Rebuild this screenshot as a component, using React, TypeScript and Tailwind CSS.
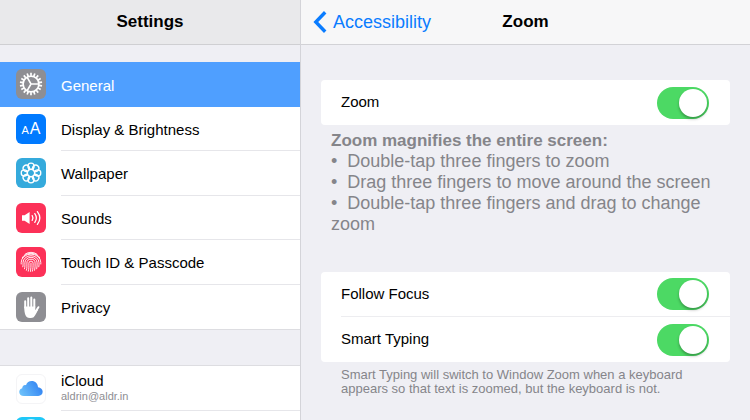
import { useState, type ReactNode } from "react";

interface NavItem {
  name: string;
  color: string;
  icon: ReactNode;
}

const TEETH = Array.from({ length: 18 }, (_, i) => i * 20);
const PETALS = Array.from({ length: 8 }, (_, i) => i * 45);

function GearIcon() {
  return (
    <svg viewBox="0 0 30 30" className="w-full h-full" fill="none" stroke="white">
      <circle cx="15" cy="15" r="7.9" strokeWidth="1.7" />
      {TEETH.map((a) => (
        <path key={a} d="M15 6.8V3.8" strokeWidth="1.7" transform={`rotate(${a} 15 15)`} />
      ))}
      <path d="M15 15h7.5M15 15L11.2 8.4M15 15L11.2 21.6" strokeWidth="1.6" />
    </svg>
  );
}

function FlowerIcon() {
  return (
    <svg viewBox="0 0 30 30" className="w-full h-full" fill="none" stroke="white" strokeWidth="1.3">
      {PETALS.map((a) => (
        <circle key={a} cx="15" cy="8.3" r="3.1" transform={`rotate(${a} 15 15)`} />
      ))}
      <circle cx="15" cy="15" r="3.6" />
    </svg>
  );
}

function SpeakerIcon() {
  return (
    <svg viewBox="0 0 30 30" className="w-full h-full" fill="none" stroke="white" strokeLinecap="round">
      <path d="M6 12.2h2.6L13.6 9v12l-5-3.2H6z" fill="white" stroke="none" />
      <path d="M16.2 12.6c1 1.5 1 3.3 0 4.8" strokeWidth="1.3" />
      <path d="M18.8 10.6c1.9 2.7 1.9 6.1 0 8.8" strokeWidth="1.3" />
      <path d="M21.4 8.600c3 3.900 3 8.900 0 12.800" strokeWidth="1.3" />
    </svg>
  );
}

function FingerprintIcon() {
  return (
    <svg viewBox="0 0 30 30" className="w-full h-full" fill="none" stroke="white" strokeWidth="0.9" strokeLinecap="round">
      <path d="M9 7.200a10 10 0 0 1 12 0" />
      <path d="M6.200 10.800a9.800 8 0 0 1 17.600 0" />
      <path d="M5.200 17v-1.500a9.800 8.400 0 0 1 19.600 0V17" />
      <path d="M6.800 19.800c.5-1.400.2-2.700.2-4.100a8 7 0 0 1 16 0c0 1.500.2 2.700-.2 4.100" />
      <path d="M8.500 21.800c.6-2 .4-4 .4-6a6.100 5.500 0 0 1 12.200 0c0 2.200.1 4.200-.4 6" />
      <path d="M10.400 23.300c.7-2.300.5-4.800.5-7.200a4.100 3.900 0 0 1 8.200 0c0 2.600.1 4.900-.5 7.200" />
      <path d="M12.300 24.200c.8-2.700.6-5.300.6-8a2.100 2.100 0 0 1 4.200 0c0 2.800 0 5.400-.7 8" />
      <path d="M15 16.200c0 2.800 0 5.600-.5 8.200" />
    </svg>
  );
}

function HandIcon() {
  return (
    <svg viewBox="0 0 30 30" className="w-full h-full" fill="none" stroke="white" strokeLinecap="round">
      <path d="M9.200 15.500V9.200M12.200 14.500V6.300M15.300 14.500V5.500M18.300 15V7.500" strokeWidth="2" />
      <path d="M18.800 20.800l3.600-5.600" strokeWidth="2" />
      <path
        d="M8.200 14.500h11.100v4l1.500-1.800 1.400 1c-1.500 2.600-2.100 4-3.200 5.700-1 1.700-2.100 2.500-4.100 2.500h-1.100c-2.300 0-3.600-1-4.400-3-.8-2.100-1.200-5-1.200-8.400z"
        fill="white"
        stroke="none"
      />
    </svg>
  );
}

function CloudIcon() {
  return (
    <svg viewBox="0 0 30 30" className="w-full h-full">
      <defs>
        <linearGradient id="cloud" x1="0" y1="0.7" x2="1" y2="0.3">
          <stop offset="0" stopColor="#6cc0fa" />
          <stop offset="1" stopColor="#2f80f2" />
        </linearGradient>
      </defs>
      <path
        d="M7.300 22.500c-2.900 0-4.900-1.800-4.900-4.300 0-2.100 1.300-3.700 3.200-4.100 0-2.200 1.800-3.800 4-3.200 1.100-2.800 3.200-4.400 6.100-4.400 3.900 0 6.700 2.900 6.800 6.700 2.900.3 5 2.100 5 4.800 0 2.500-2 4.500-4.700 4.500z"
        fill="url(#cloud)"
      />
    </svg>
  );
}

const NAV: NavItem[] = [
  { name: "General", color: "bg-[#8e8e93]", icon: <GearIcon /> },
  {
    name: "Display & Brightness",
    color: "bg-[#007aff]",
    icon: (
      <span className="flex h-full items-baseline justify-center gap-px pt-[5px] text-white leading-5" aria-hidden="true">
        <span className="text-[11px]">A</span>
        <span className="text-[16px]">A</span>
      </span>
    ),
  },
  { name: "Wallpaper", color: "bg-[#35aadc]", icon: <FlowerIcon /> },
  { name: "Sounds", color: "bg-[#fc3158]", icon: <SpeakerIcon /> },
  { name: "Touch ID & Passcode", color: "bg-[#fc3158]", icon: <FingerprintIcon /> },
  { name: "Privacy", color: "bg-[#8e8e93]", icon: <HandIcon /> },
];

function SwitchRow({ id, label, divider }: { id: string; label: string; divider?: boolean }) {
  const [on, setOn] = useState(true);

  return (
    <div className="pl-5">
      <div className={`flex items-center justify-between h-[45px] pr-[21px] ${divider ? "border-b border-[#ededf0]" : ""}`}>
        <label htmlFor={id} className="text-[15px] text-black">
          {label}
        </label>
        <input
          id={id}
          type="checkbox"
          role="switch"
          checked={on}
          onChange={(e) => setOn(e.target.checked)}
          className="appearance-none shrink-0 w-[52px] h-8 p-[2px] rounded-full bg-[#e5e5ea] checked:bg-[#4cd964] cursor-pointer before:block before:size-7 before:rounded-full before:bg-white before:shadow-[0_2px_3px_rgba(0,0,0,0.3)] checked:before:ml-5"
        />
      </div>
    </div>
  );
}

export default function App() {
  const [active, setActive] = useState("General");

  return (
    <div className="flex h-screen overflow-hidden bg-[#efeff4] text-black font-['Liberation_Sans',Arial,sans-serif]">
      {/* Sidebar */}
      <aside className="w-2/5 shrink-0 box-content border-r border-[#d4d4d9]">
        <header className="flex items-center justify-center h-[45px] border-b border-[#cfcfd2] bg-[#e9e9eb]">
          <h1 className="text-[17px] font-bold">Settings</h1>
        </header>

        <nav className="pt-[17px]">
          <div className="grid auto-rows-fr min-h-[268px] bg-white border-b border-[#dddde1]">
            {NAV.map((item, idx) => {
              const selected = item.name === active;
              return (
                <a
                  key={item.name}
                  href="#"
                  onClick={() => setActive(item.name)}
                  className={`flex items-center gap-[15px] pl-4 ${selected ? "bg-[#4f9fff] text-white" : ""}`}
                >
                  <span className={`size-[30px] shrink-0 rounded-md overflow-hidden ${item.color}`}>{item.icon}</span>
                  <span
                    className={`flex flex-1 items-center self-stretch pt-[3px] text-[15px] ${
                      selected || idx === NAV.length - 1 ? "" : "border-b border-[#e6e6ea]"
                    }`}
                  >
                    {item.name}
                  </span>
                </a>
              );
            })}
          </div>

          <div className="mt-[35px] bg-white border-t border-[#dddde1]">
            <a href="#" className="flex items-center gap-[15px] pl-4">
              <span className="size-[30px] shrink-0 rounded-md border border-[#f4f4f6]">
                <CloudIcon />
              </span>
              <span className="flex flex-col flex-1 justify-center h-[45px] border-b border-[#e6e6ea]">
                <span className="text-[15px] leading-4">iCloud</span>
                <span className="text-[11px] leading-[14px] text-[#8e8e93]">aldrin@aldr.in</span>
              </span>
            </a>
            <a href="#" aria-label="App Store" className="flex py-[6px] pl-4">
              <span className="size-[30px] shrink-0 rounded-md bg-[#1fc8f8]">
                <svg viewBox="0 0 30 30" className="w-full h-full" fill="none" stroke="white" strokeWidth="1.5">
                  <circle cx="15" cy="15" r="12" />
                </svg>
              </span>
            </a>
          </div>
        </nav>
      </aside>

      {/* Detail pane */}
      <main className="flex-1 min-w-0">
        <header className="grid grid-cols-[1fr_auto_1fr] items-center h-[45px] px-3 border-b border-[#d2d2d6] bg-[#f7f7f8]">
          <button type="button" className="flex items-center gap-[6px] justify-self-start text-[18px] text-[#0a7cff]">
            <svg viewBox="0 0 14 22" className="w-[14px] h-[22px]" fill="none" stroke="currentColor" strokeWidth="3.4">
              <path d="M12.2 1.300L2.800 11l9.400 9.700" />
            </svg>
            Accessibility
          </button>
          <h2 className="text-[17px] font-bold">Zoom</h2>
        </header>

        <div className="px-5 pt-[35px]">
          <section className="rounded-sm bg-white">
            <SwitchRow id="zoom" label="Zoom" />
          </section>
          <div className="px-[10px] pt-[5px] leading-[21px] text-[#85858a]">
            <p className="text-[17px] leading-[21px] font-bold">Zoom magnifies the entire screen:</p>
            <ul className="text-[18px] leading-[21px]">
              <li>•&nbsp; Double-tap three fingers to zoom</li>
              <li>•&nbsp; Drag three fingers to move around the screen</li>
              <li>•&nbsp; Double-tap three fingers and drag to change zoom</li>
            </ul>
          </div>

          <section className="mt-[37px] rounded-sm bg-white">
            <SwitchRow id="follow-focus" label="Follow Focus" divider />
            <SwitchRow id="smart-typing" label="Smart Typing" />
          </section>
          <p className="px-5 pt-[6px] text-[13px] leading-[14px] text-[#85858a]">
            Smart Typing will switch to Window Zoom when a keyboard
            <br />
            appears so that text is zoomed, but the keyboard is not.
          </p>
        </div>
      </main>
    </div>
  );
}
